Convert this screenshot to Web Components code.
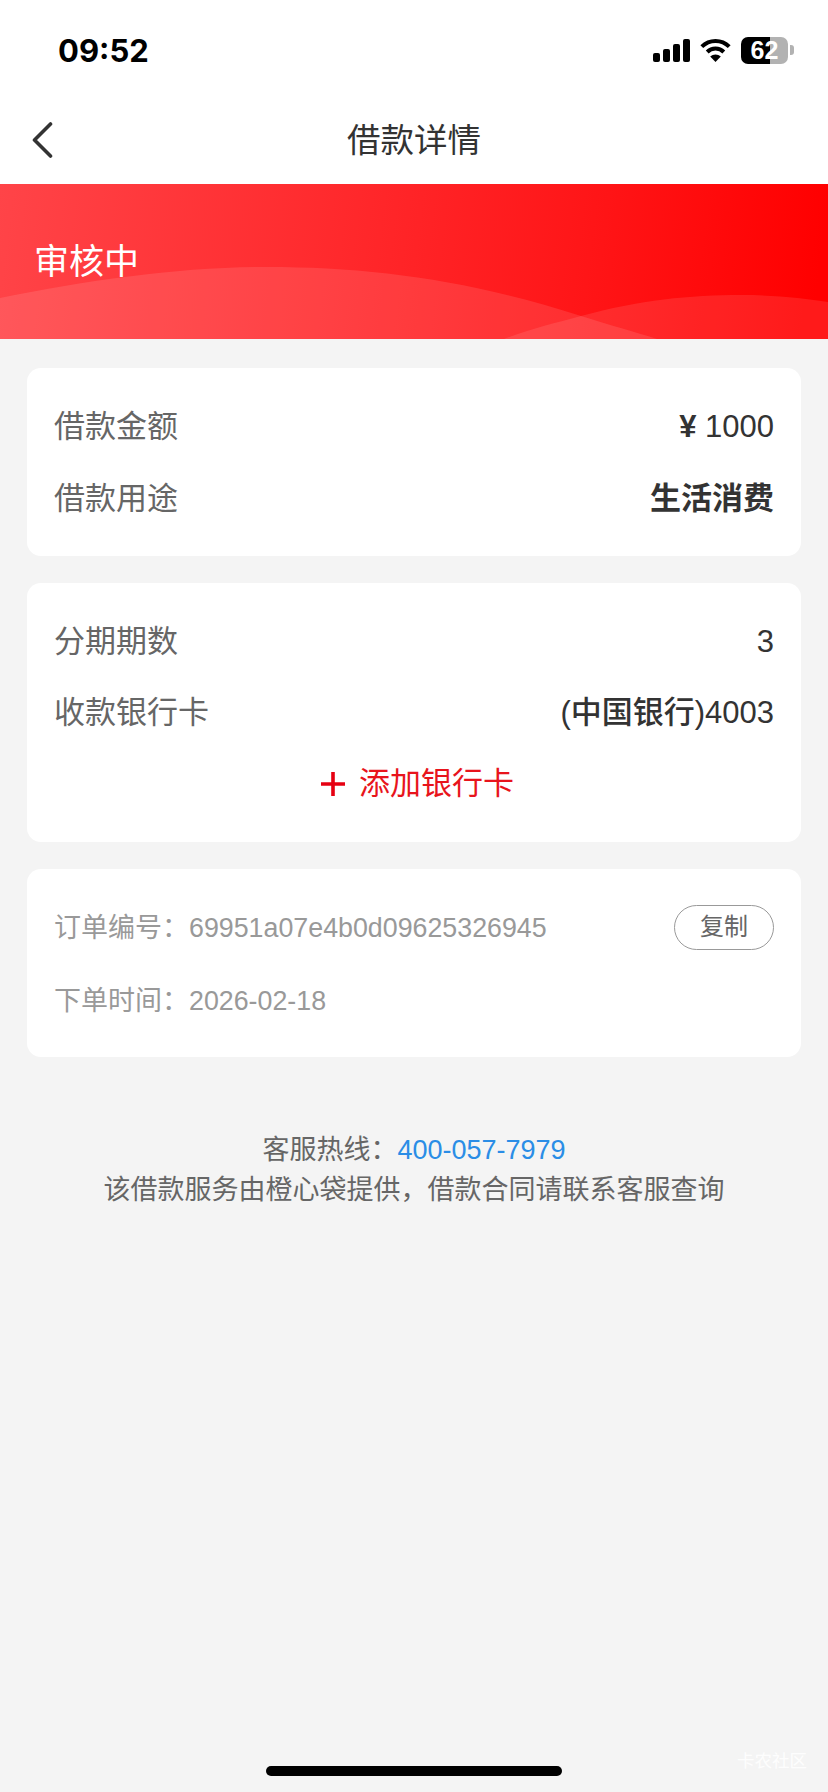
<!DOCTYPE html>
<html lang="zh-CN">
<head>
<meta charset="utf-8">
<title>借款详情</title>
<style>
    html, body {
        margin: 0;
        padding: 0;
        background: #f4f4f4;
        font-family: "Liberation Sans", "Noto Sans CJK SC", sans-serif;
    }
</style>
</head>
<body>
<loan-page>
    <status-bar></status-bar>
    <nav-bar>借款详情</nav-bar>
    <status-banner>审核中</status-banner>
    <info-card>
        <info-row label="借款金额"><b>¥</b> 1000</info-row>
        <info-row label="借款用途" strong>生活消费</info-row>
    </info-card>
    <info-card>
        <info-row label="分期期数">3</info-row>
        <info-row label="收款银行卡" tight><span style="font-weight:500">(中国银行)</span>4003</info-row>
        <add-card>添加银行卡</add-card>
    </info-card>
    <info-card>
        <order-row label="订单编号：" value="69951a07e4b0d09625326945"><copy-button>复制</copy-button></order-row>
        <order-row label="下单时间：" value="2026-02-18"></order-row>
    </info-card>
    <service-note phone="400-057-7979">该借款服务由橙心袋提供，借款合同请联系客服查询</service-note>
    <home-indicator></home-indicator>
</loan-page>

<script>
const CJK_STACK = '"Liberation Sans", "Noto Sans CJK SC", sans-serif';

class LoanPage extends HTMLElement {
    constructor() {
        super();
        this.attachShadow({ mode: "open" });
        this.shadowRoot.innerHTML = `
            <style>
                :host {
                    display: flex;
                    flex-direction: column;
                    position: relative;
                    width: 828px;
                    height: 1792px;
                    overflow: hidden;
                    background: #f4f4f4;
                    font-family: ${CJK_STACK};
                }
                .content {
                    display: flex;
                    flex-direction: column;
                    gap: 27px;
                    padding: 29px 27px 0;
                }
                .watermark {
                    position: absolute;
                    right: 21px;
                    bottom: 21px;
                    font-size: 17.5px;
                    line-height: 20px;
                    color: rgba(255, 255, 255, 0.9);
                }
            </style>
            <slot name="top"></slot>
            <div class="content"><slot></slot></div>
            <div class="watermark">卡农社区</div>
        `;
    }

    connectedCallback() {
        ["status-bar", "nav-bar", "status-banner"].forEach((tag) => {
            const el = this.querySelector(tag);
            if (el) el.slot = "top";
        });
    }
}

class StatusBar extends HTMLElement {
    constructor() {
        super();
        this.attachShadow({ mode: "open" });
        this.shadowRoot.innerHTML = `
            <style>
                :host {
                    display: flex;
                    align-items: center;
                    justify-content: space-between;
                    height: 100px;
                    padding: 0 34px 0 58px;
                    box-sizing: border-box;
                    background: #fff;
                    color: #000;
                }
                .time {
                    font-family: Inter, "Liberation Sans", sans-serif;
                    font-size: 31px;
                    font-weight: 700;
                }
                .icons {
                    display: flex;
                    align-items: center;
                    gap: 10px;
                }
                svg { display: block; }
                .battery {
                    position: relative;
                    width: 47px;
                    height: 27px;
                    border-radius: 7px;
                    overflow: hidden;
                    background: linear-gradient(to right, #000 29px, #b2b2b2 29px);
                    color: #fff;
                    font-family: "Liberation Sans", sans-serif;
                    font-size: 25px;
                    font-weight: 700;
                    line-height: 27px;
                    text-align: center;
                }
                .tip {
                    width: 4px;
                    height: 10px;
                    margin-left: -8px;
                    border-radius: 0 3px 3px 0;
                    background: #b2b2b2;
                }
            </style>
            <div class="time">09:52</div>
            <div class="icons">
                <svg width="37" height="23" viewBox="0 0 37 23" fill="#000">
                    <rect x="0" y="14" width="7" height="9" rx="2"/>
                    <rect x="10" y="10" width="7" height="13" rx="2"/>
                    <rect x="20" y="5" width="7" height="18" rx="2"/>
                    <rect x="30" y="0" width="7" height="23" rx="2"/>
                </svg>
                <svg width="31" height="24" viewBox="0 0 31 24" fill="none" stroke="#000" stroke-width="4">
                    <path d="M1.8 8.6C9.4 1 21.6 1 29.2 8.6"/>
                    <path d="M7.2 14C11.8 9.4 19.2 9.4 23.8 14"/>
                    <path d="M15.5 24L10.2 18.6C13.1 15.7 17.9 15.7 20.8 18.6Z" fill="#000" stroke="none"/>
                </svg>
                <div class="battery">62</div>
                <div class="tip"></div>
            </div>
        `;
    }
}

class NavBar extends HTMLElement {
    constructor() {
        super();
        this.attachShadow({ mode: "open" });
        this.shadowRoot.innerHTML = `
            <style>
                :host {
                    display: flex;
                    align-items: center;
                    justify-content: center;
                    position: relative;
                    height: 84px;
                    background: #fff;
                    color: #333;
                    font-size: 33.5px;
                    line-height: 40px;
                    padding-bottom: 2px;
                    box-sizing: border-box;
                }
                svg {
                    position: absolute;
                    left: 31px;
                    top: 22px;
                }
            </style>
            <svg width="23" height="36" viewBox="0 0 23 36" fill="none" stroke="#333" stroke-width="3.6" stroke-linecap="round" stroke-linejoin="round">
                <path d="M19.5 2L3.5 18L19.5 34"/>
            </svg>
            <slot></slot>
        `;
    }
}

class StatusBanner extends HTMLElement {
    constructor() {
        super();
        this.attachShadow({ mode: "open" });
        this.shadowRoot.innerHTML = `
            <style>
                :host {
                    display: block;
                    position: relative;
                    height: 155px;
                    background: linear-gradient(97deg, #ff4448 0%, #ff2326 50%, #ff1416 72%, #ff0000 98%);
                    color: #fff;
                    font-size: 35px;
                    overflow: hidden;
                }
                .label {
                    position: relative;
                    padding: 54px 0 0 34px;
                    line-height: 48px;
                }
                svg {
                    position: absolute;
                    left: 0;
                    top: 0;
                }
            </style>
            <svg width="828" height="155" viewBox="0 0 828 155">
                <path d="M0 114C90 96 180 83 267 83C370 83 470 96 581 132C610 141 635 148 657 155H0Z" fill="#fff" fill-opacity="0.11"/>
                <path d="M504 155C530 145 555 139 581 132C640 116 690 111 741 111C775 111 805 114 828 118V155Z" fill="#fff" fill-opacity="0.1"/>
            </svg>
            <div class="label"><slot></slot></div>
        `;
    }
}

class InfoCard extends HTMLElement {
    constructor() {
        super();
        this.attachShadow({ mode: "open" });
        this.shadowRoot.innerHTML = `
            <style>
                :host {
                    display: flex;
                    flex-direction: column;
                    padding: 23px 27px 21px;
                    background: #fff;
                    border-radius: 14px;
                }
            </style>
            <slot></slot>
        `;
    }
}

class InfoRow extends HTMLElement {
    constructor() {
        super();
        this.attachShadow({ mode: "open" });
        this.shadowRoot.innerHTML = `
            <style>
                :host {
                    display: flex;
                    align-items: center;
                    justify-content: space-between;
                    height: 72px;
                    font-size: 31px;
                    line-height: 40px;
                    color: #666;
                }
                :host([tight]) { margin-top: -1px; }
                .value { color: #333; }
                :host([strong]) .value { font-weight: 600; }
            </style>
            <span class="label"></span>
            <span class="value"><slot></slot></span>
        `;
    }

    connectedCallback() {
        this.shadowRoot.querySelector(".label").textContent = this.getAttribute("label");
    }
}

class AddCard extends HTMLElement {
    constructor() {
        super();
        this.attachShadow({ mode: "open" });
        this.shadowRoot.innerHTML = `
            <style>
                :host {
                    display: flex;
                    align-items: center;
                    justify-content: center;
                    gap: 14px;
                    height: 71px;
                    margin: -1px 0 2px;
                    font-size: 31px;
                    line-height: 40px;
                    color: #e8141c;
                    padding-left: 7px;
                }
                svg { display: block; }
            </style>
            <svg width="24" height="24" viewBox="0 0 24 24" stroke="#e60012" stroke-width="3.6">
                <path d="M0 12H24M12 0V24"/>
            </svg>
            <span><slot></slot></span>
        `;
    }
}

class OrderRow extends HTMLElement {
    constructor() {
        super();
        this.attachShadow({ mode: "open" });
        this.shadowRoot.innerHTML = `
            <style>
                :host {
                    display: flex;
                    align-items: center;
                    height: 72px;
                    font-size: 27px;
                    line-height: 36px;
                    color: #999;
                }
                :host(:last-child) {
                    margin-top: 1px;
                    margin-bottom: -1px;
                }
                .value { flex: 1; font-size: 26.8px; }
            </style>
            <span class="label"></span>
            <span class="value"></span>
            <slot></slot>
        `;
    }

    connectedCallback() {
        this.shadowRoot.querySelector(".label").textContent = this.getAttribute("label");
        this.shadowRoot.querySelector(".value").textContent = this.getAttribute("value");
    }
}

class CopyButton extends HTMLElement {
    constructor() {
        super();
        this.attachShadow({ mode: "open" });
        this.shadowRoot.innerHTML = `
            <style>
                :host {
                    display: flex;
                    align-items: center;
                    justify-content: center;
                    width: 100px;
                    height: 45px;
                    margin-top: -2px;
                    box-sizing: border-box;
                    border: 1px solid #999;
                    border-radius: 23px;
                    font-size: 24px;
                    line-height: 30px;
                    color: #666;
                }
            </style>
            <slot></slot>
        `;
    }
}

class ServiceNote extends HTMLElement {
    constructor() {
        super();
        this.attachShadow({ mode: "open" });
        this.shadowRoot.innerHTML = `
            <style>
                :host {
                    display: block;
                    margin-top: 46px;
                    text-align: center;
                    font-size: 27px;
                    line-height: 40px;
                    color: #666;
                }
                .phone { color: #2a8de6; }
            </style>
            <div>客服热线：<span class="phone"></span></div>
            <div><slot></slot></div>
        `;
    }

    connectedCallback() {
        this.shadowRoot.querySelector(".phone").textContent = this.getAttribute("phone");
    }
}

class HomeIndicator extends HTMLElement {
    constructor() {
        super();
        this.attachShadow({ mode: "open" });
        this.shadowRoot.innerHTML = `
            <style>
                :host {
                    position: absolute;
                    left: 266px;
                    bottom: 16px;
                    width: 296px;
                    height: 10px;
                    border-radius: 5px;
                    background: #000;
                }
            </style>
        `;
    }
}

customElements.define("loan-page", LoanPage);
customElements.define("status-bar", StatusBar);
customElements.define("nav-bar", NavBar);
customElements.define("status-banner", StatusBanner);
customElements.define("info-card", InfoCard);
customElements.define("info-row", InfoRow);
customElements.define("add-card", AddCard);
customElements.define("order-row", OrderRow);
customElements.define("copy-button", CopyButton);
customElements.define("service-note", ServiceNote);
customElements.define("home-indicator", HomeIndicator);
</script>
</body>
</html>
